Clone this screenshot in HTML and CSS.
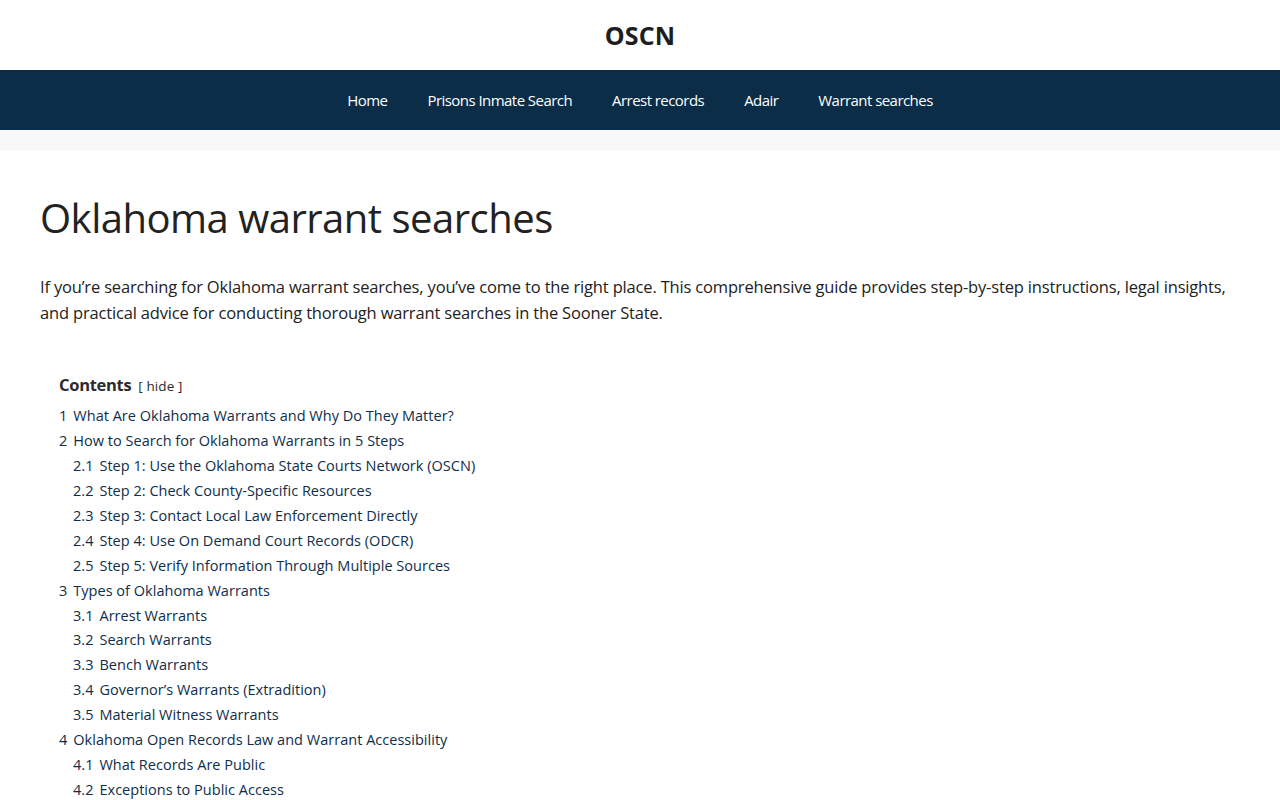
FILE: index.html
```html
<!DOCTYPE html>
<html lang="en">
<head>
<meta charset="utf-8">
<title>Oklahoma warrant searches - OSCN</title>
<link rel="stylesheet" href="styles.css">
</head>
<body>
<header class="site-header">
  <div class="site-title">OSCN</div>
</header>
<nav class="main-nav">
  <a href="#">Home</a>
  <a href="#">Prisons Inmate Search</a>
  <a href="#">Arrest records</a>
  <a href="#">Adair</a>
  <a href="#">Warrant searches</a>
</nav>
<div class="strip"></div>
<main class="content">
  <h1 class="page-title">Oklahoma warrant searches</h1>
  <p class="intro">If you’re searching for Oklahoma warrant searches, you’ve come to the right place. This comprehensive guide provides step-by-step instructions, legal insights, and practical advice for conducting thorough warrant searches in the Sooner State.</p>
  <div class="toc">
    <div class="toc-title">Contents <span class="toc-toggle">[ <a href="#">hide</a> ]</span></div>
    <ul class="toc-list">
      <li><a href="#"><span class="num">1</span>What Are Oklahoma Warrants and Why Do They Matter?</a></li>
      <li><a href="#"><span class="num">2</span>How to Search for Oklahoma Warrants in 5 Steps</a>
        <ul>
          <li><a href="#"><span class="num">2.1</span>Step 1: Use the Oklahoma State Courts Network (OSCN)</a></li>
          <li><a href="#"><span class="num">2.2</span>Step 2: Check County-Specific Resources</a></li>
          <li><a href="#"><span class="num">2.3</span>Step 3: Contact Local Law Enforcement Directly</a></li>
          <li><a href="#"><span class="num">2.4</span>Step 4: Use On Demand Court Records (ODCR)</a></li>
          <li><a href="#"><span class="num">2.5</span>Step 5: Verify Information Through Multiple Sources</a></li>
        </ul>
      </li>
      <li><a href="#"><span class="num">3</span>Types of Oklahoma Warrants</a>
        <ul>
          <li><a href="#"><span class="num">3.1</span>Arrest Warrants</a></li>
          <li><a href="#"><span class="num">3.2</span>Search Warrants</a></li>
          <li><a href="#"><span class="num">3.3</span>Bench Warrants</a></li>
          <li><a href="#"><span class="num">3.4</span>Governor’s Warrants (Extradition)</a></li>
          <li><a href="#"><span class="num">3.5</span>Material Witness Warrants</a></li>
        </ul>
      </li>
      <li><a href="#"><span class="num">4</span>Oklahoma Open Records Law and Warrant Accessibility</a>
        <ul>
          <li><a href="#"><span class="num">4.1</span>What Records Are Public</a></li>
          <li><a href="#"><span class="num">4.2</span>Exceptions to Public Access</a></li>
        </ul>
      </li>
    </ul>
  </div>
</main>
</body>
</html>
```

FILE: styles.css
```css
* { box-sizing: border-box; }
body {
  margin: 0;
  font-family: "Open Sans", "Noto Sans", "Liberation Sans", sans-serif;
  color: #222;
  background: #fff;
}
a { text-decoration: none; color: inherit; }
.site-header {
  height: 70px;
  display: flex;
  align-items: center;
  justify-content: center;
}
.site-title {
  font-size: 25px;
  font-weight: 700;
  color: #1e1e1e;
  letter-spacing: 0.2px;
}
.main-nav {
  height: 60px;
  background: #0b2d48;
  display: flex;
  justify-content: center;
  align-items: center;
  gap: 40px;
}
.main-nav a {
  color: #fff;
  font-size: 15px;
  letter-spacing: -0.55px;
}
.strip {
  height: 20px;
  background: #f8f8f9;
}
.content {
  padding: 40px 40px 0;
}
.page-title {
  margin: 0;
  font-weight: 400;
  font-size: 40px;
  line-height: 56px;
  color: #222;
  letter-spacing: -0.5px;
}
.intro {
  margin: 28px 0 0;
  font-size: 16.5px;
  line-height: 26px;
  color: #222;
  letter-spacing: -0.17px;
}
.toc {
  margin-top: 46px;
  padding: 0 19px;
}
.toc-title {
  font-size: 16.5px;
  font-weight: 700;
  color: #2b2b2b;
  line-height: 26px;
  letter-spacing: -0.3px;
}
.toc-toggle {
  font-weight: 400;
  font-size: 13.5px;
  margin-left: 3px;
  letter-spacing: 0.1px;
}
.toc-list, .toc-list ul {
  list-style: none;
  margin: 0;
  padding: 0;
}
.toc-list { margin-top: 5px; }
.toc-list ul { padding-left: 14px; }
.toc-list li a {
  display: block;
  font-size: 14.5px;
  line-height: 24.93px;
  color: #0f2e4a;
  letter-spacing: 0.02px;
}
.num { margin-right: 6px; }
```
